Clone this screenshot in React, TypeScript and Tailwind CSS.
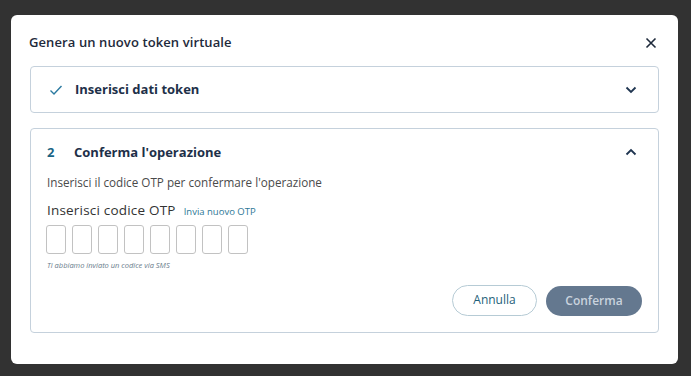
import React from "react";

function Check() {
  return (
    <svg width="14" height="14" viewBox="0 0 14 14" fill="none">
      <path d="M1.5 7.5 L5 11 L12.5 3" stroke="#2b7aa0" strokeWidth="1.4" />
    </svg>
  );
}

function Chevron({ up }: { up?: boolean }) {
  return (
    <svg width="12" height="8" viewBox="0 0 12 8" fill="none">
      <path
        d={up ? "M1.5 6.5 L6 2 L10.5 6.5" : "M1.5 1.5 L6 6 L10.5 1.5"}
        stroke="#1f3550"
        strokeWidth="1.8"
      />
    </svg>
  );
}

export default function App() {
  const boxes = [0, 1, 2, 3, 4, 5, 6, 7];
  return (
    <div
      className="w-[691px] h-[376px] bg-[#323232] pt-[15px] pl-[11px]"
      style={{ fontFamily: '"Open Sans", "Noto Sans", sans-serif' }}
    >
      <div className="w-[667px] h-[349px] bg-white rounded-[6px] px-[19px] pt-[16px] flex flex-col">
        <div className="flex items-center justify-between h-[24px]">
          <div className="text-[13px] font-semibold text-[#1e2a3b] tracking-[0.1px] -ml-[1px]">
            Genera un nuovo token virtuale
          </div>
          <svg width="12" height="12" viewBox="0 0 12 12" className="mr-[2px]">
            <path d="M1.5 1.5 L10.5 10.5 M10.5 1.5 L1.5 10.5" stroke="#1e2a3b" strokeWidth="1.6" />
          </svg>
        </div>

        <div className="mt-[11px] h-[47px] border border-[#c5d1dc] rounded-[4px] flex items-center pl-[18px] pr-[21px]">
          <Check />
          <div className="ml-[12px] text-[13px] font-bold text-[#1e3049] flex-1">
            Inserisci dati token
          </div>
          <Chevron />
        </div>

        <div className="mt-[15px] h-[205px] border border-[#c5d1dc] rounded-[4px] pl-[15px] pr-[16px] pt-[13px]">
          <div className="flex items-center h-[22px]">
            <div className="w-[28px] pl-[1px] text-[13px] font-bold text-[#1a6585]">2</div>
            <div className="text-[13px] font-bold text-[#1e3049] flex-1">
              Conferma l'operazione
            </div>
            <div className="mr-[5px] -mt-[2px]">
              <Chevron up />
            </div>
          </div>
          <div className="mt-[10px] pl-[1px] text-[11.7px] text-[#4a4a4a] leading-[16px]">
            Inserisci il codice OTP per confermare l'operazione
          </div>
          <div className="mt-[10px] pl-[1px] flex items-baseline">
            <span className="text-[13.5px] text-[#333] tracking-[0.2px]">Inserisci codice OTP</span>
            <span className="ml-[8px] text-[9.5px] text-[#2e7896]">Invia nuovo OTP</span>
          </div>
          <div className="mt-[5px] flex gap-[6px]">
            {boxes.map((b) => (
              <div key={b} className="w-[20px] h-[29px] border border-[#c2c2c2] rounded-[3px]" />
            ))}
          </div>
          <div className="mt-[6px] pl-[1px] text-[7.5px] italic text-[#6b7d8c]">
            Ti abbiamo inviato un codice via SMS
          </div>
          <div className="mt-[13px] flex justify-end gap-[9px]">
            <button className="w-[85px] h-[31px] rounded-full border border-[#b6cbd5] text-[12px] text-[#1f5f7a] bg-white">
              Annulla
            </button>
            <button className="w-[96px] h-[30px] mt-[1px] rounded-full bg-[#64788f] text-[12px] font-semibold text-[#c9d3de]">
              Conferma
            </button>
          </div>
        </div>
      </div>
    </div>
  );
}
